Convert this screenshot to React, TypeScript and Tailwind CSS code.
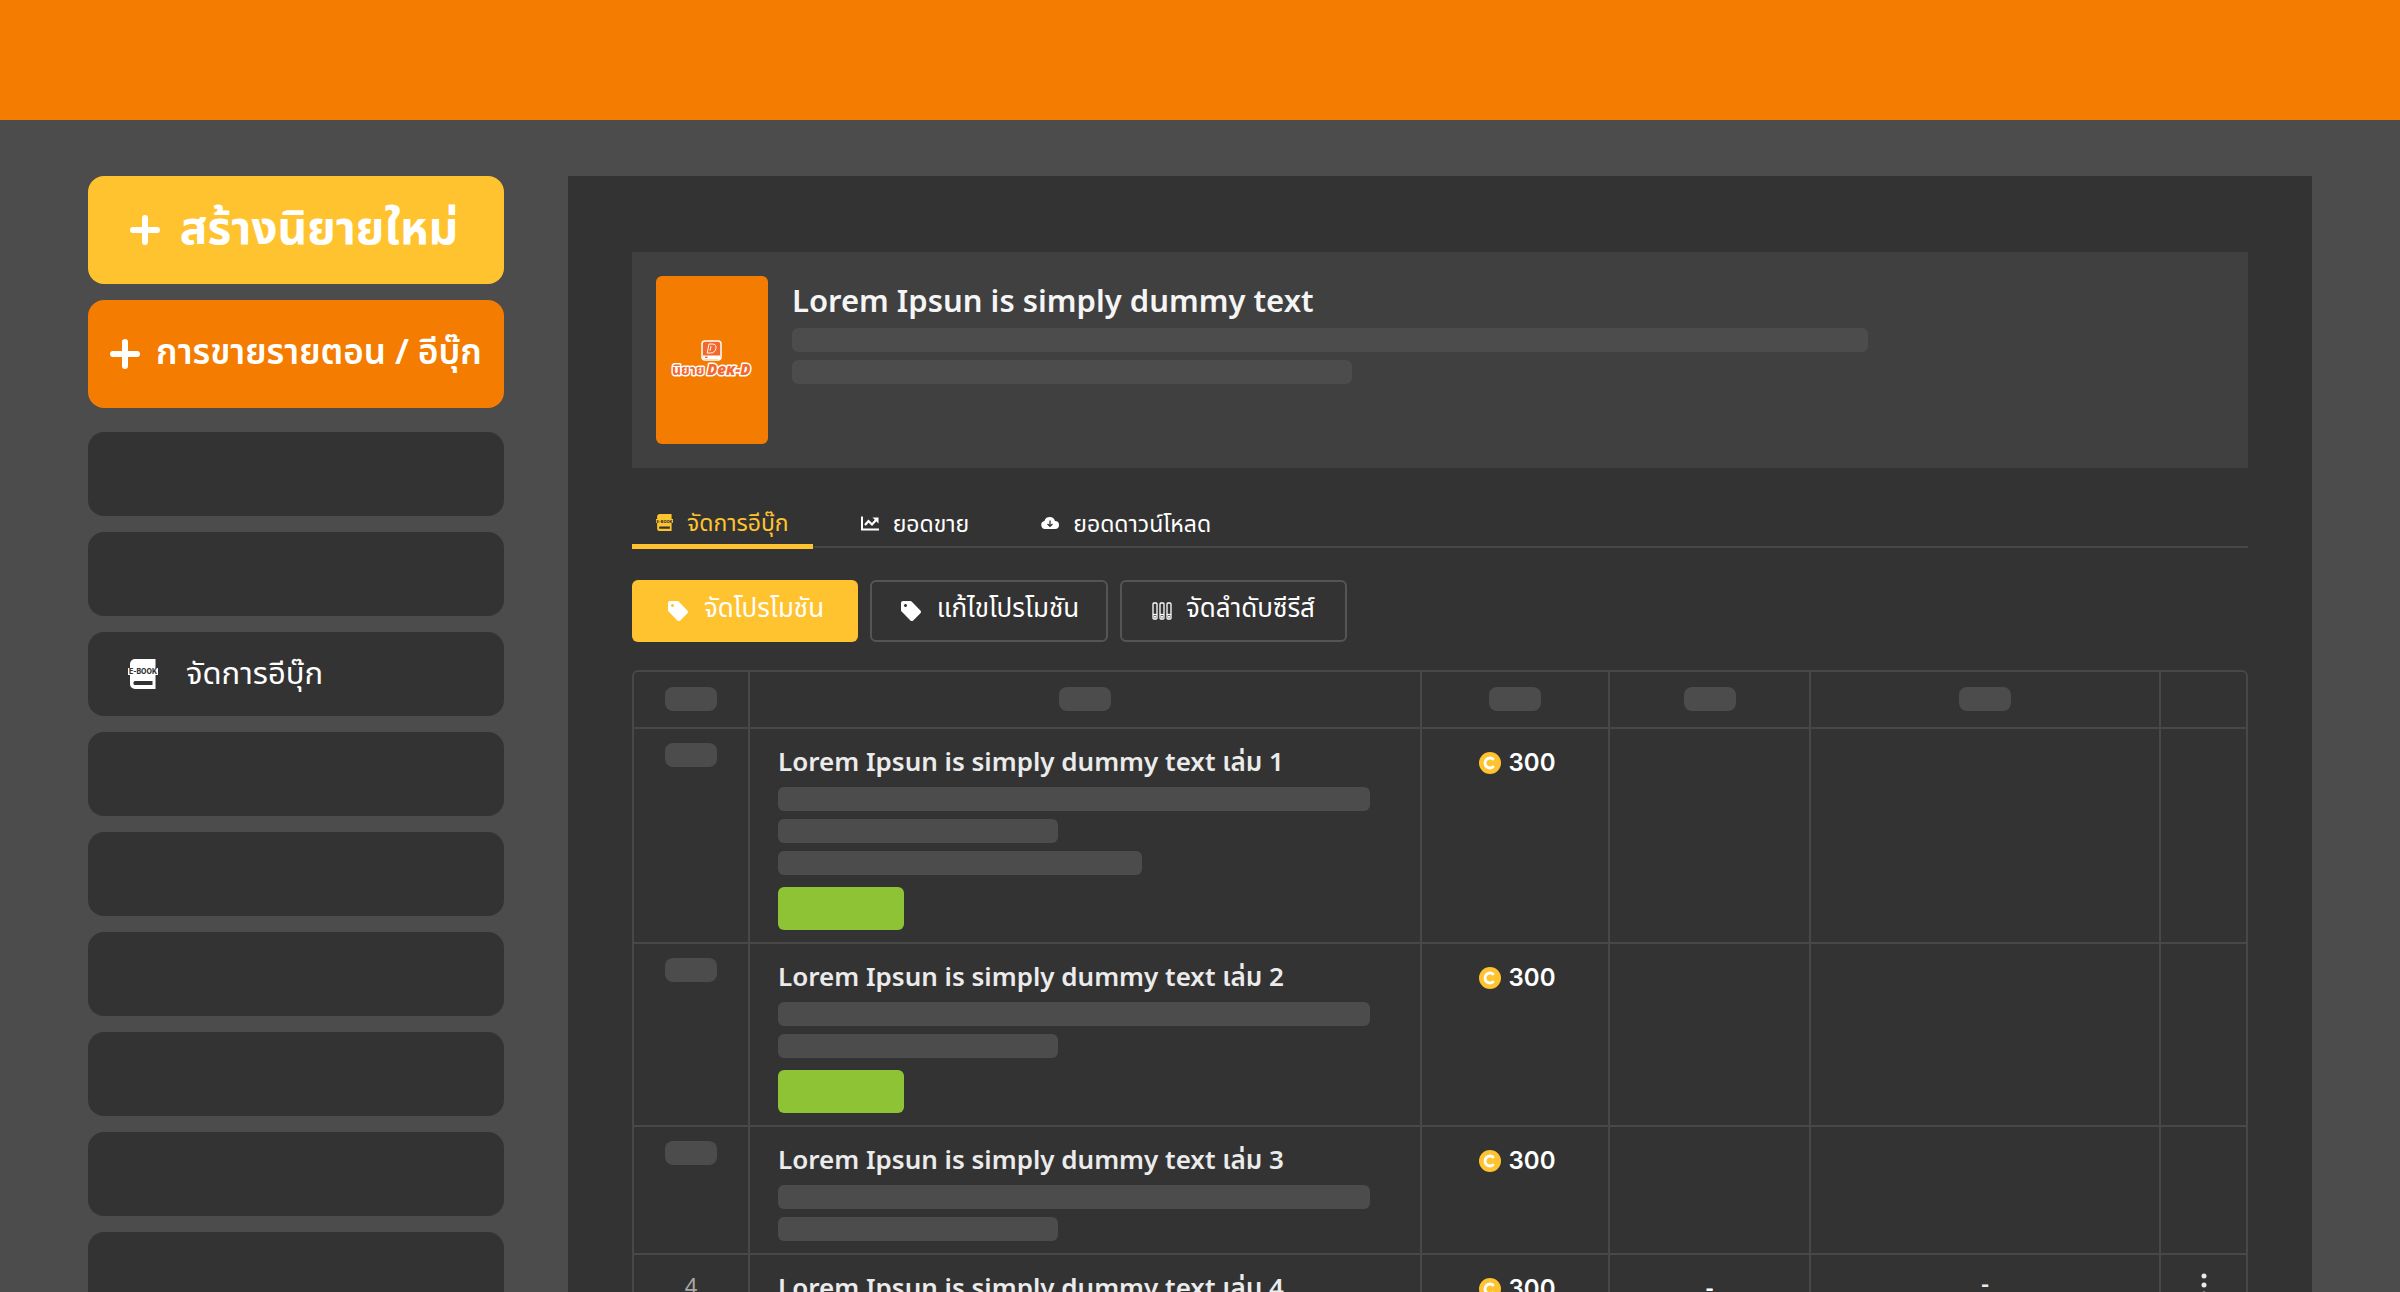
import React from 'react';
import { MdSell } from 'react-icons/md';

interface Book {
  no: number;
  bars: string[];
  onSale: boolean;
  loaded?: boolean;
}

const books: Book[] = [
  { no: 1, bars: ['w-[592px]', 'w-[280px]', 'w-[364px]'], onSale: true },
  { no: 2, bars: ['w-[592px]', 'w-[280px]'], onSale: true },
  { no: 3, bars: ['w-[592px]', 'w-[280px]'], onSale: false },
  { no: 4, bars: ['w-[592px]', 'w-[280px]'], onSale: false, loaded: true },
];

const sidebarItems = ['', '', 'จัดการอีบุ๊ก', '', '', '', '', '', ''];

function PlusIcon() {
  return (
    <svg width="30" height="30" viewBox="0 0 30 30" className="shrink-0" aria-hidden="true">
      <path d="M15 3v24M3 15h24" stroke="currentColor" strokeWidth="6" strokeLinecap="round" />
    </svg>
  );
}

function EbookIcon({ size, band }: { size: number; band: string }) {
  return (
    <svg width={size} height={size} viewBox="0 0 30 30" className="shrink-0" aria-hidden="true">
      <path d="M7 0h20.500v9H30v7H27.500v14H7a5 5 0 0 1-5-5V16H0V9h2V5a5 5 0 0 1 5-5z" fill="currentColor" />
      <path d="M7 22h17.500v4H7a1.500 1.500 0 0 1-1.500-1.500V23.500A1.500 1.500 0 0 1 7 22z" fill={band} />
      <text
        x="15"
        y="15"
        textAnchor="middle"
        fontSize="7"
        fontWeight="800"
        fill={band}
        className="font-['Inter',sans-serif]"
      >
        E-BOOK
      </text>
    </svg>
  );
}

function ChartIcon() {
  return (
    <svg width="18" height="15" viewBox="0 0 18 15" className="shrink-0" fill="none" stroke="currentColor" aria-hidden="true">
      <path d="M1 0.500v13h17" strokeWidth="2" />
      <path d="M4 9l3.500-4 3.500 3.500 5-5.500" strokeWidth="2.200" />
      <path d="M11.500 1.500h6v6z" fill="currentColor" stroke="none" />
    </svg>
  );
}

function CloudIcon() {
  return (
    <svg width="18" height="12" viewBox="0 0 18 12" className="shrink-0" aria-hidden="true">
      <path d="M4 12a4 4 0 0 1-.600-7.900A5.500 5.500 0 0 1 14 4a4 4 0 0 1 0 8z" fill="currentColor" />
      <path d="M9 3.500v5.500M6.500 7L9 9.300 11.500 7" fill="none" stroke="#333333" strokeWidth="1.300" />
    </svg>
  );
}

function SeriesIcon() {
  return (
    <svg width="20" height="18" viewBox="0 0 20 18" className="shrink-0" fill="none" stroke="currentColor" aria-hidden="true">
      {[1, 8, 15].map((x) => (
        <g key={x} strokeWidth="1.300">
          <rect x={x} y="1" width="4" height="16" rx="1" />
          <path d={`M${x} 12.500h4`} />
          <circle cx={x + 2} cy="14.800" r="0.500" />
        </g>
      ))}
    </svg>
  );
}

function CoinIcon() {
  return (
    <svg width="22" height="22" viewBox="0 0 22 22" className="shrink-0" aria-hidden="true">
      <circle cx="11" cy="11" r="11" fill="#ffc32f" />
      <path d="M14.800 7.800a5 5 0 1 0 0 6.400" fill="none" stroke="#fff" strokeWidth="2.800" />
    </svg>
  );
}

function CoverLogo() {
  return (
    <svg width="84" height="40" viewBox="0 0 84 40" role="img" aria-label="นิยาย Dek-D">
      <rect x="32" y="1" width="19" height="19" rx="3" fill="#f4692b" stroke="#fff" strokeWidth="1.500" />
      <path d="M33 15.500h17v3.500H33z" fill="#fff" />
      <path d="M35 17.300h2.500" stroke="#f4692b" strokeWidth="1.500" />
      <path d="M39 4h3.200c3 0 4.300 1.800 3.700 4.500-.600 3-2.600 4.500-5.400 4.500h-3.300zM41 6.200l-1 4.600" fill="none" stroke="#fff" strokeWidth="1" />
      <g
        fill="#f4692b"
        stroke="#fff"
        strokeWidth="3"
        strokeLinejoin="round"
        className="[paint-order:stroke] font-['Noto_Sans','Noto_Sans_Thai',sans-serif]"
      >
        <text x="2" y="35" fontSize="14" fontWeight="700">นิยาย</text>
        <text x="37" y="35" fontSize="15" fontWeight="900" fontStyle="italic">Deĸ-D</text>
      </g>
    </svg>
  );
}

function Pill() {
  return <div className="mx-auto h-6 w-[52px] rounded-lg bg-[#4c4c4c]" />;
}

function Bar({ width }: { width: string }) {
  return <div className={`h-6 max-w-full rounded-md bg-[#4c4c4c] ${width}`} />;
}

const cell = 'border-b-2 border-r-2 border-[#484848] align-top last:border-r-0';

function BookRow({ book }: { book: Book }) {
  return (
    <tr>
      <td className={`${cell} pt-[14px]`}>
        {book.loaded ? <div className="text-center text-[22px] leading-8 text-[#a8a8a8]">{book.no}</div> : <Pill />}
      </td>
      <td className={`${cell} px-7 pt-[14px] pb-3`}>
        <h3 className="mb-2 text-[26px] leading-9 font-semibold text-[#ebebeb]">
          Lorem Ipsun is simply dummy text เล่ม {book.no}
        </h3>
        <div className="space-y-2">
          {book.bars.map((width) => (
            <Bar key={width} width={width} />
          ))}
        </div>
        {book.onSale && <div className="mt-3 h-[43px] w-[126px] rounded-md bg-[#8dc334]" />}
      </td>
      <td className={`${cell} pt-[14px]`}>
        <div className="flex h-10 items-center justify-center gap-2 pl-1 font-['Inter',sans-serif] text-2xl font-semibold text-white">
          <CoinIcon />
          300
        </div>
      </td>
      <td className={`${cell} pt-3 text-center text-2xl leading-10 font-semibold`}>{book.loaded && '-'}</td>
      <td className={`${cell} pt-2 text-center text-2xl leading-10 font-semibold text-[#ebebeb]`}>{book.loaded && '-'}</td>
      <td className={`${cell} pt-[18px] text-center`}>
        {book.loaded && (
          <button type="button" aria-label="เมนู" className="align-top">
            <svg width="6" height="24" viewBox="0 0 6 24" fill="#ebebeb" aria-hidden="true">
              <circle cx="3" cy="3" r="2.500" />
              <circle cx="3" cy="12" r="2.500" />
              <circle cx="3" cy="21" r="2.500" />
            </svg>
          </button>
        )}
      </td>
    </tr>
  );
}

export default function App() {
  return (
    <div className="flex h-screen flex-col overflow-hidden bg-[#4c4c4c] font-['Noto_Sans','Noto_Sans_Thai',sans-serif] text-white">
      <header className="h-[120px] shrink-0 bg-[#f47c00]" />

      <div className="flex min-h-0 flex-1 items-stretch gap-16 px-[88px] pt-14">
        <aside className="w-[416px] shrink-0">
          <button
            type="button"
            className="mb-4 flex h-[108px] w-full items-center justify-center gap-5 rounded-2xl bg-[#ffc32f] pr-1 text-[46px] leading-none font-bold"
          >
            <PlusIcon />
            <span className="pb-2">สร้างนิยายใหม่</span>
          </button>
          <button
            type="button"
            className="mb-6 flex h-[108px] w-full items-center justify-center gap-4 rounded-2xl bg-[#f47c00] text-[35px] leading-none font-semibold whitespace-nowrap"
          >
            <PlusIcon />
            <span className="pb-2">การขายรายตอน / อีบุ๊ก</span>
          </button>
          <nav className="space-y-4">
            {sidebarItems.map((label, i) => (
              <a key={i} href="#" className="flex h-[84px] items-center gap-7 rounded-2xl bg-[#333333] px-10 text-[31px]">
                {label && (
                  <>
                    <EbookIcon size={30} band="#333333" />
                    <span className="pb-1">{label}</span>
                  </>
                )}
              </a>
            ))}
          </nav>
        </aside>

        <main className="min-w-0 flex-1 bg-[#333333] px-16 pt-[76px]">
          <section className="flex h-[216px] gap-6 bg-[#404040] p-6">
            <div className="flex w-[112px] shrink-0 items-center justify-center rounded-md bg-[#f47c00]">
              <CoverLogo />
            </div>
            <div className="min-w-0 flex-1 space-y-2">
              <h2 className="mb-1 text-[31px] leading-[48px] font-semibold text-[#f5f5f5]">Lorem Ipsun is simply dummy text</h2>
              <Bar width="w-[1076px]" />
              <Bar width="w-[560px]" />
            </div>
          </section>

          <nav className="mt-8 flex h-12 gap-6 border-b-2 border-[#484848] text-[23px]">
            <a href="#" className="-mb-[3px] flex items-center gap-[14px] border-b-[5px] border-[#ffc32f] px-6 text-[#ffc32f]">
              <EbookIcon size={17} band="#333333" />
              จัดการอีบุ๊ก
            </a>
            <a href="#" className="flex items-center gap-[14px] px-6">
              <ChartIcon />
              ยอดขาย
            </a>
            <a href="#" className="flex items-center gap-[14px] px-6">
              <CloudIcon />
              ยอดดาวน์โหลด
            </a>
          </nav>

          <div className="mt-8 flex gap-3 text-[26px]">
            <button type="button" className="flex h-[62px] w-[226px] items-center justify-center gap-[14px] rounded-md bg-[#ffc32f]">
              <MdSell size={24} />
              <span className="pb-2">จัดโปรโมชัน</span>
            </button>
            <button
              type="button"
              className="flex h-[62px] w-[238px] items-center justify-center gap-[14px] rounded-md border-2 border-[#555555]"
            >
              <MdSell size={24} />
              <span className="pb-2">แก้ไขโปรโมชัน</span>
            </button>
            <button
              type="button"
              className="flex h-[62px] w-[227px] items-center justify-center gap-[14px] rounded-md border-2 border-[#555555]"
            >
              <SeriesIcon />
              <span className="pb-2">จัดลำดับซีรีส์</span>
            </button>
          </div>

          <div className="mt-7 overflow-hidden rounded-md border-2 border-[#484848]">
            <table className="w-full table-fixed border-separate border-spacing-0">
              <colgroup>
                <col className="w-[116px]" />
                <col />
                <col className="w-[188px]" />
                <col className="w-[201px]" />
                <col className="w-[350px]" />
                <col className="w-[85px]" />
              </colgroup>
              <thead>
                <tr>
                  {[0, 1, 2, 3, 4].map((i) => (
                    <th key={i} className={`${cell} pt-[15px] pb-4`}>
                      <Pill />
                    </th>
                  ))}
                  <th className={cell} />
                </tr>
              </thead>
              <tbody>
                {books.map((book) => (
                  <BookRow key={book.no} book={book} />
                ))}
              </tbody>
            </table>
          </div>
        </main>
      </div>
    </div>
  );
}
